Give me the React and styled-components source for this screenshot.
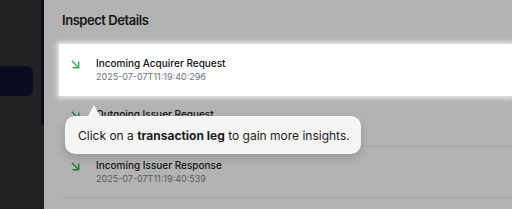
import React from "react";
import styled, { createGlobalStyle } from "styled-components";

const Global = createGlobalStyle`
  html, body { margin: 0; padding: 0; }
  body { font-family: Inter, "Noto Sans", sans-serif; overflow: hidden; }
  * { box-sizing: border-box; }
`;

const Shell = styled.div`
  display: flex;
  width: 512px;
  height: 209px;
  overflow: hidden;
`;

const Sidebar = styled.aside`
  width: 44px;
  flex: none;
  background: #222222;
`;

const SideRail = styled.div`
  height: 125px;
  border-right: 3px solid #0b0e1c;
  padding-top: 66px;
`;

const NavItem = styled.div`
  width: 33px;
  height: 30px;
  background: #0a0d20;
  border-radius: 0 6px 6px 0;
`;

const Main = styled.main`
  position: relative;
  flex: 1;
  background: #b3b3b3;
  padding: 10px 0 0 15px;
`;

const Title = styled.h2`
  margin: 0 0 14px 3px;
  font-size: 13px;
  line-height: 20px;
  font-weight: 600;
  color: #151515;
  letter-spacing: -0.45px;
`;

const List = styled.div`
  display: flex;
  flex-direction: column;
`;

const Row = styled.div`
  position: relative;
  display: flex;
  align-items: flex-start;
  height: ${(p) => (p.$active ? 52 : 51)}px;
  padding: ${(p) => (p.$active ? 12 : 11)}px 0 0 11px;
  background: ${(p) => (p.$active ? "#ffffff" : "transparent")};
  box-shadow: ${(p) =>
    p.$active ? "0 0 5px 2px rgba(255,255,255,0.75)" : "none"};
  z-index: ${(p) => (p.$active ? 2 : 0)};

  &::after {
    content: "";
    display: ${(p) => (p.$active ? "none" : "block")};
    position: absolute;
    left: 3px;
    right: 0;
    bottom: 0;
    height: 1px;
    background: #a3a3a3;
  }
`;

const IconBox = styled.div`
  width: 26px;
  flex: none;
  padding-top: 3px;
  color: ${(p) => (p.$active ? "#2fb34d" : "#1f7a36")};
  display: flex;
`;

const Texts = styled.div`
  display: flex;
  flex-direction: column;
`;

const RowTitle = styled.div`
  font-size: 10px;
  line-height: 14px;
  font-weight: 500;
  color: ${(p) => (p.$active ? "#111111" : "#141414")};
`;

const Stamp = styled.div`
  font-size: 9px;
  line-height: 13px;
  color: ${(p) => (p.$active ? "#6b7280" : "#5a5a5e")};
`;

const Tooltip = styled.div`
  position: absolute;
  left: 21px;
  top: 116px;
  width: 296px;
  height: 38px;
  display: flex;
  align-items: center;
  padding-left: 13px;
  background: #f5f5f5;
  border-radius: 10px;
  box-shadow: 0 4px 10px rgba(0, 0, 0, 0.18);
  font-size: 12px;
  color: #1a1a1a;
  z-index: 3;
  white-space: nowrap;

  &::before {
    content: "";
    position: absolute;
    left: 23px;
    top: -11px;
    border-left: 6px solid transparent;
    border-right: 6px solid transparent;
    border-bottom: 11px solid #f5f5f5;
  }

  b { font-weight: 700; }
`;

const ArrowIcon = () => (
  <svg width="11" height="11" viewBox="0 0 24 24" fill="none" stroke="currentColor" strokeWidth="3" strokeLinecap="square">
    <path d="M5 5l13 13" />
    <path d="M19 7v12H7" />
  </svg>
);

const rows = [
  { title: "Incoming Acquirer Request", time: "2025-07-07T11:19:40:296", active: true },
  { title: "Outgoing Issuer Request", time: "2025-07-07T11:19:40:301" },
  { title: "Incoming Issuer Response", time: "2025-07-07T11:19:40:539" },
];

export default function App() {
  return (
    <>
      <Global />
      <Shell>
        <Sidebar>
          <SideRail>
            <NavItem />
          </SideRail>
        </Sidebar>
        <Main>
          <Title>Inspect Details</Title>
          <List>
            {rows.map((r) => (
              <Row key={r.title} $active={r.active}>
                <IconBox $active={r.active}>
                  <ArrowIcon />
                </IconBox>
                <Texts>
                  <RowTitle $active={r.active}>{r.title}</RowTitle>
                  <Stamp $active={r.active}>{r.time}</Stamp>
                </Texts>
              </Row>
            ))}
          </List>
          <Tooltip>
            <span>
              Click on a <b>transaction leg</b> to gain more insights.
            </span>
          </Tooltip>
        </Main>
      </Shell>
    </>
  );
}
